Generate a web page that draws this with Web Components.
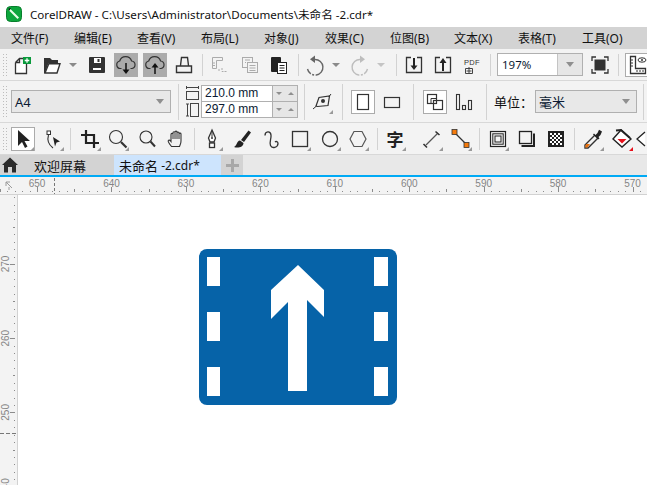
<!DOCTYPE html>
<html lang="zh-CN">

<head>
    <meta charset="UTF-8">
    <title>CorelDRAW</title>
    <style>
        html, body { margin: 0; padding: 0; background: #fff; }
        body { font: 12px "Noto Sans", "Noto Sans CJK SC", sans-serif; color: #111; }
    </style>
</head>

<body>
    <cdr-app></cdr-app>

    <script>
        const D = "#333";
        const G = "#ababab";
        // 工具图标，都画在 24x24 里
        const ICONS = {
            new: `<path d="M4.5 9.5 8.5 5.5H13M15.5 11V20.5H4.5V9.5M8.5 5.5V9.5H4.5" fill="#fff" stroke="${D}" stroke-width="1.3"/><rect x="12" y="4" width="8" height="7" fill="#0a9a3c"/><path d="M16 5.2v4.6M13.7 7.5h4.6" stroke="#fff" stroke-width="1.3"/>`,
            open: `<path d="M4 20V5h6l2 2h6v3H8.5L5 20z" fill="${D}"/><path d="M8.8 10.7H20L17 20H5z" fill="#fff" stroke="${D}" stroke-width="1.4"/>`,
            save: `<rect x="4" y="4" width="16" height="16" rx="1" fill="${D}"/><rect x="9" y="5" width="7" height="5" fill="#fff"/><rect x="12.5" y="6" width="2" height="3" fill="${D}"/><rect x="8" y="15" width="8" height="2" fill="#fff"/>`,
            cloudDown: `<path d="M7.5 15.5H6.5A3.8 3.8 0 0 1 5.7 8 6.2 6.2 0 0 1 17.6 8 3.8 3.8 0 0 1 18 15.5H16.5" fill="none" stroke="${D}" stroke-width="1.2"/><path d="M12 10v8" stroke="#111" stroke-width="1.5"/><path d="M8.5 16.5h7L12 21z" fill="#111"/>`,
            cloudUp: `<path d="M7.5 15.5H6.5A3.8 3.8 0 0 1 5.7 8 6.2 6.2 0 0 1 17.6 8 3.8 3.8 0 0 1 18 15.5H16.5" fill="none" stroke="${D}" stroke-width="1.2"/><path d="M12 13v8" stroke="#111" stroke-width="1.5"/><path d="M8.5 14.5h7L12 10z" fill="#111"/>`,
            print: `<path d="M8.5 12.5 9.5 4.5H15.5L16.5 12.5M8.5 13H4.5V19.5H19.5V13H16.5M8 13H16.5" fill="none" stroke="${D}" stroke-width="1.4"/>`,
            doc1: `<path d="M4.5 4.5H14.5V7.5H8.5V15.5H4.5z" fill="none" stroke="${G}"/><path d="M7 10H4.5M7 12.5H4.5M14 15v3.5h4.5" stroke="${G}" fill="none" stroke-dasharray="2 1"/><path d="M10 17h2" stroke="${G}"/>`,
            doc2: `<rect x="4.5" y="4.5" width="10" height="10" fill="none" stroke="${G}"/><rect x="9.5" y="9.5" width="10" height="10" fill="#f3f3f3" stroke="${G}"/><path d="M7 7h5M7 9.5h1M11.5 12.5h6M11.5 15h6M11.5 17.5h6" stroke="${G}"/>`,
            clip: `<rect x="4" y="4" width="10" height="15" rx="1" fill="#222"/><rect x="10.5" y="9.5" width="9" height="11" fill="#fff" stroke="#222"/><path d="M12.5 12.5h5M12.5 15h5M12.5 17.5h5" stroke="#222"/>`,
            undo: `<path d="M12 6.5A7.8 7.8 0 1 1 4.5 16" fill="none" stroke="#666" stroke-width="1.4" stroke-dasharray="24 1.5 2 1.5"/><path d="M12 2.5V10L7 6.2z" fill="#666"/>`,
            redo: `<path d="M12 6.5A7.8 7.8 0 1 0 19.5 16" fill="none" stroke="#bdbdbd" stroke-width="1.4" stroke-dasharray="24 1.5 2 1.5"/><path d="M12 2.5V10L17 6.2z" fill="#bdbdbd"/>`,
            import: `<path d="M9 4.5H4.5V19.5H19.5V4.5H15" fill="none" stroke="${D}" stroke-width="1.3"/><path d="M12 5v9" stroke="#222" stroke-width="2"/><path d="M8.5 12.5h7L12 17z" fill="#222"/>`,
            export: `<path d="M9 4.5H4.5V19.5H19.5V4.5H15" fill="none" stroke="${D}" stroke-width="1.3"/><path d="M12 8v10" stroke="#222" stroke-width="2"/><path d="M8.5 10h7L12 5z" fill="#222"/>`,
            pdf: `<text x="12" y="11.5" text-anchor="middle" font-size="7.5" font-family="Liberation Sans" letter-spacing=".4" fill="#333">PDF</text><path d="M5.5 15.5h7v5h-7zM9 14v6M6.5 18h5" fill="none" stroke="#444"/>`,
            fit: `<rect x="6.5" y="6.5" width="11" height="11" fill="${D}"/><path d="M4 8V4H8M16 4H20V8M20 16V20H16M8 20H4V16" fill="none" stroke="${D}" stroke-width="1.3"/>`,
            rulers: `<path d="M5.5 3.5V20.5H20.5V15.5H10.5V3.5z" fill="none" stroke="${D}" stroke-width="1.3"/><path d="M6 7h2M6 10h2M6 13h2M12 19v-2M15 19v-2M18 19v-2" stroke="${D}"/><ellipse cx="17" cy="7" rx="4" ry="2.2" fill="none" stroke="${D}"/><circle cx="17" cy="7" r="1" fill="${D}"/>`,
            snap: `<path d="M6 16 9 7.5 19.5 6 18 15.5 7.5 16.5z" fill="none" stroke="${D}" stroke-width="1.2"/><circle cx="13" cy="11" r="2" fill="${D}"/><path d="M3 19 6.5 16M19 6.5 21 4" stroke="${D}"/>`,
            portrait: `<rect x="6.5" y="4.5" width="11" height="15" fill="none" stroke="${D}" stroke-width="1.2"/>`,
            landscape: `<rect x="4.5" y="7.5" width="15" height="10" fill="none" stroke="${D}" stroke-width="1.2"/>`,
            pages: `<rect x="4.5" y="4.5" width="9" height="9" fill="none" stroke="${D}" stroke-width="1.2"/><rect x="10.5" y="10.5" width="9" height="9" fill="none" stroke="${D}" stroke-width="1.2"/><path d="M8 8.5h5.5v5H8z" fill="none" stroke="${D}"/>`,
            bars: `<rect x="4.5" y="4.5" width="3" height="15" fill="none" stroke="${D}" stroke-width="1.1"/><rect x="10.5" y="15.5" width="3" height="4" fill="none" stroke="${D}" stroke-width="1.1"/><rect x="16.5" y="10.5" width="3" height="9" fill="none" stroke="${D}" stroke-width="1.1"/>`,
            pointer: `<path d="M7 3V19L11 15 14 21 16.5 19.5 13.5 14H19z" fill="#222"/>`,
            node: `<rect x="6" y="4" width="3.5" height="3.5" fill="#fff" stroke="#333"/><path d="M7.5 8C6 13 8 18 12 21" fill="none" stroke="#333" stroke-width="1.1"/><path d="M12 9l7 4.5-3.5 1-1.5 4z" fill="#222" transform="translate(0 1)"/>`,
            crop: `<path d="M8 3V16H21M3 8H16V21" fill="none" stroke="#222" stroke-width="2.2"/>`,
            zoomFly: `<circle cx="10" cy="10" r="6.5" fill="none" stroke="${D}" stroke-width="1.1"/><path d="M15 15 20.5 20.5" stroke="${D}" stroke-width="2.2"/>`,
            zoom: `<circle cx="11" cy="10" r="6" fill="none" stroke="${D}" stroke-width="1.1"/><path d="M15.5 14.5 20 19.5" stroke="${D}" stroke-width="2"/>`,
            hand: `<path d="M7.5 19.5C5.5 17 4 15 4.2 13.8 4.5 12.5 6 13 7 14.5V7.5C7 6 9 6 9 7.5V5.8C9 4.3 11 4.3 11 5.8V5.2C11 3.8 13 3.8 13 5.2V6C13 4.7 15 4.7 15 6V7C15 5.8 17 5.8 17 7V14C17 17 16 18 15.5 19.5z" fill="#f3f3f3" stroke="${D}" stroke-width="1.1"/><path d="M9 7.5V12M11 5.8V12M13 6V12M15 7V12" stroke="${D}"/>`,
            pen: `<path d="M12 3 15.5 11 14 15H10L8.5 11z" fill="#fff" stroke="${D}" stroke-width="1.3"/><path d="M12 4v6" stroke="${D}"/><circle cx="12" cy="11" r="1" fill="${D}"/><rect x="9.5" y="16" width="5" height="4.5" fill="#fff" stroke="${D}" stroke-width="1.3"/>`,
            brush: `<path d="M11 13 18.5 3.5 21 5.5 14 15z" fill="#222"/><path d="M10 13.5C6.5 14 7.5 18 4 20 8 21.5 13.5 20 13.5 16z" fill="#222"/>`,
            curve: `<path d="M5 8.5C5 4 10.5 3.5 11 8 11.5 12 9 15 10.5 18.5 12 22 18 20.5 18 16.5 18 14.5 16 14 15 15" fill="none" stroke="${D}" stroke-width="1.3"/>`,
            rect: `<rect x="4.5" y="4.5" width="15" height="15" fill="none" stroke="${D}" stroke-width="1.3"/>`,
            ellipse: `<circle cx="12" cy="12" r="7.5" fill="none" stroke="${D}" stroke-width="1.3"/>`,
            hexagon: `<path d="M8 4.5H16L20 12 16 19.5H8L4 12z" fill="none" stroke="#555" stroke-width="1.2"/>`,
            char: `<text x="12" y="19" text-anchor="middle" font-size="17" font-weight="700" font-family="Noto Sans CJK SC" fill="#222">字</text>`,
            line: `<path d="M6 18 18 6" stroke="#555" stroke-width="1.2"/><path d="M3.5 17 7 20.5M15.5 4.5 19.5 8" stroke="#333" stroke-width="1.6"/>`,
            connector: `<path d="M6 6 18 18" stroke="#333" stroke-width="1.2"/><rect x="3" y="2.5" width="5" height="5" fill="#f47a0c" stroke="#333" stroke-width=".8"/><rect x="15" y="15.5" width="5" height="5" fill="#f47a0c" stroke="#333" stroke-width=".8"/>`,
            contour: `<rect x="4.5" y="4.5" width="15" height="15" fill="none" stroke="#222" stroke-width="1.2"/><rect x="6.8" y="6.8" width="10.4" height="10.4" fill="none" stroke="#222"/><rect x="9" y="9" width="6" height="6" fill="none" stroke="#222"/>`,
            shadow: `<rect x="4.5" y="4.5" width="12" height="12" fill="none" stroke="#222" stroke-width="1.3"/><path d="M18 6.5h2V20H6.5v-2H18z" fill="#222"/>`,
            checker: `<rect x="4" y="4" width="16" height="16" fill="#222"/><path d="M6 6h2v2H6zM10 6h2v2h-2zM14 6h2v2h-2zM8 8h2v2H8zM12 8h2v2h-2zM16 8h2v2h-2zM6 10h2v2H6zM10 10h2v2h-2zM14 10h2v2h-2zM8 12h2v2H8zM12 12h2v2h-2zM16 12h2v2h-2zM6 14h2v2H6zM10 14h2v2h-2zM14 14h2v2h-2zM8 16h2v2H8zM12 16h2v2h-2zM16 16h2v2h-2z" fill="#fff"/>`,
            dropper: `<path d="M14 8 4 18 4 21 7 21 17 11" fill="none" stroke="#333" stroke-width="1.4"/><path d="M5 17 9 17 6.5 20.5H4z" fill="#e8710f"/><path d="M13 6.5 14.5 8 16.5 6 18 2.8 21 4.5 19.5 8 17.5 10 18.5 11.5 17 12.5 12 7.5z" fill="#222"/>`,
            fill: `<path d="M11 3 21 12 12 20 3 12z" fill="#fff" stroke="#222" stroke-width="1.4"/><path d="M6 3.5 11 3 20 11" fill="none" stroke="#222" stroke-width="2"/><path d="M7.5 12H16.5L12 16.5z" fill="#e8101c"/>`,
            next: `<path d="M12 5 4 12 12 19" fill="#fff" stroke="#222" stroke-width="1.3"/>`
        };

        // 工具栏把手
        class TbGrip extends HTMLElement {
            constructor() {
                super();
                this.attachShadow({ mode: "open" }).innerHTML = `<style>
                    :host { display: block; flex: none; width: 8px; align-self: stretch; margin: 4px 0;
                        background: radial-gradient(circle, #bdbdbd .8px, transparent 1px) 2px 0 / 3px 3px repeat;
                        clip-path: inset(0 1px 0 2px); }
                </style>`;
            }
        }
        // 分隔线
        class TbSep extends HTMLElement {
            constructor() {
                super();
                const w = this.getAttribute("w") || 2;
                const h = this.getAttribute("h") || 22;
                this.attachShadow({ mode: "open" }).innerHTML = `<style>
                    :host { display: flex; flex: none; justify-content: center; align-items: center; width: ${w}px; }
                    i { display: block; width: 1px; height: ${h}px; background: #d2d2d2; }
                </style><i></i>`;
            }
        }
        class TbGap extends HTMLElement {
            constructor() {
                super();
                this.attachShadow({ mode: "open" }).innerHTML = `<style>:host { display: block; flex: none; width: ${this.getAttribute("w")}px; }</style>`;
            }
        }
        // 工具按钮
        class TbTool extends HTMLElement {
            constructor() {
                super();
                const w = this.getAttribute("w") || 24;
                const fly = this.getAttribute("fly");
                const state = this.getAttribute("state");
                const look = state === "pressed" ? "background:#ababab;width:24px;height:24px;"
                    : state === "on" ? "background:#fff;outline:1px solid #ababab;outline-offset:-1px;width:24px;height:24px;" : "";
                const corner = fly === null ? "" :
                    `<b style="border-bottom-color:${fly === "red" ? "#e8101c" : "#9a9a9a"}"></b>`;
                this.attachShadow({ mode: "open" }).innerHTML = `<style>
                    :host { display: flex; flex: none; width: ${w}px; height: 24px; justify-content: center; align-items: center; }
                    span { position: relative; flex: none; display: flex; width: 24px; height: 24px; ${look} }
                    svg { width: 24px; height: 24px; flex: none; }
                    b { position: absolute; left: 19px; top: 20px; width: 0; height: 0; border-left: 4px solid transparent; border-bottom: 4px solid; }
                </style><span><svg viewBox="0 0 24 24">${ICONS[this.getAttribute("icon")]}</svg>${corner}</span>`;
            }
        }
        // 小三角
        class TbCaret extends HTMLElement {
            constructor() {
                super();
                const w = this.getAttribute("w") || 10;
                const c = this.getAttribute("c") || "#8a8a8a";
                this.attachShadow({ mode: "open" }).innerHTML = `<style>
                    :host { display: flex; flex: none; width: ${w}px; justify-content: center; align-items: center; }
                    i { display: block; border: 4px solid transparent; border-top: 4px solid ${c}; border-bottom: 0; }
                </style><i></i>`;
            }
        }
        // 下拉框
        class TbCombo extends HTMLElement {
            constructor() {
                super();
                const w = this.getAttribute("w");
                const white = this.hasAttribute("white");
                this.attachShadow({ mode: "open" }).innerHTML = `<style>
                    :host { display: flex; flex: none; box-sizing: border-box; width: ${w}px; height: ${this.getAttribute("h") || 23}px;
                        border: 1px solid #b0b0b0; background: ${white ? "#fff" : "#e8e8e8"}; align-items: center;
                        font-size: ${white ? 11.5 : 13}px; color: #0b1a33; }
                    .t { flex: 1; padding-left: ${white ? 4 : 3}px; white-space: nowrap; }
                    .b { display: flex; align-items: center; justify-content: center; align-self: stretch; width: ${white ? 24 : 20}px;
                        ${white ? "background:#e6e6e6;border-left:1px solid #c4c4c4;" : ""} }
                    i { display: block; border: 4.5px solid transparent; border-top: 5px solid #8f8f8f; border-bottom: 0; }
                </style><div class="t"><slot></slot></div><div class="b"><i></i></div>`;
            }
        }
        // 页面尺寸输入
        class TbSize extends HTMLElement {
            constructor() {
                super();
                const spin = `<span class="s"><i class="d"></i></span><span class="s"><i class="u"></i></span>`;
                this.attachShadow({ mode: "open" }).innerHTML = `<style>
                    :host { display: grid; flex: none; box-sizing: border-box; width: 97px; height: 33px; border: 1px solid #b0b0b0;
                        grid-template-columns: 1fr 12px 12px; grid-template-rows: 1fr 1fr; background: #e6e6e6;
                        font: 12px "Liberation Sans", sans-serif; color: #0b1a33; }
                    .v { background: #fff; line-height: 15px; padding-left: 3px; border-right: 1px solid #b0b0b0; }
                    .v.a { border-bottom: 1px solid #b0b0b0; }
                    .s { display: flex; align-items: center; justify-content: center; }
                    .s.l { border-bottom: 1px solid #b0b0b0; }
                    i { display: block; border: 3px solid transparent; }
                    i.d { border-top: 3px solid #8f8f8f; border-bottom: 0; }
                    i.u { border-bottom: 3px solid #8f8f8f; border-top: 0; }
                </style>
                <div class="v a">${this.getAttribute("a")}</div><span class="s l"><i class="d"></i></span><span class="s l"><i class="u"></i></span>
                <div class="v">${this.getAttribute("b")}</div>${spin}`;
            }
        }
        // 工具栏一行
        class TbRow extends HTMLElement {
            constructor() {
                super();
                this.attachShadow({ mode: "open" }).innerHTML = `<style>
                    :host { display: flex; box-sizing: content-box; height: ${this.getAttribute("h")}px; background: #f3f3f3;
                        border-bottom: 1px solid #d8d8d8; align-items: center; overflow: hidden; }
                </style><slot></slot>`;
            }
        }
        class CdrTitle extends HTMLElement {
            constructor() {
                super();
                this.attachShadow({ mode: "open" }).innerHTML = `<style>
                    :host { display: flex; height: 27px; align-items: center; background: #fff; padding-left: 6px; gap: 8px; font-size: 11.6px; color: #111; white-space: nowrap; }
                    svg { width: 16px; height: 16px; flex: none; }
                </style>
                <svg viewBox="0 0 16 16"><rect x=".5" y=".5" width="15" height="15" rx="4" fill="#0ca63c" stroke="#087f2d"/><path d="M3 4.5 4.5 3 13 11.5 11.5 13z" fill="#e8ffe8"/><path d="M2.5 2.5 5 2 3 5z" fill="#111"/></svg>
                <span><slot></slot></span>`;
            }
        }
        class CdrMenu extends HTMLElement {
            constructor() {
                super();
                const items = [["文件(F)", 11], ["编辑(E)", 74], ["查看(V)", 137], ["布局(L)", 201], ["对象(J)", 264], ["效果(C)", 325], ["位图(B)", 390], ["文本(X)", 454], ["表格(T)", 518], ["工具(O)", 582]];
                const cells = items.map((it, i) => {
                    const next = items[i + 1] ? items[i + 1][1] : 647;
                    return `<span style="width:${next - it[1]}px">${it[0]}</span>`;
                }).join("");
                this.attachShadow({ mode: "open" }).innerHTML = `<style>
                    :host { display: flex; height: 22px; background: #d3d3d3; align-items: center; padding-left: 11px; font-size: 12px; color: #111; overflow: hidden; }
                    span { flex: none; white-space: nowrap; }
                </style>${cells}`;
            }
        }
        class CdrTabs extends HTMLElement {
            constructor() {
                super();
                this.attachShadow({ mode: "open" }).innerHTML = `<style>
                    :host { display: flex; height: 20px; background: #e8e8e8; border-bottom: 2px solid #00aaf5; font-size: 13px; color: #111; box-sizing: content-box; }
                    .home { display: flex; width: 114px; background: #d3d3d3; align-items: center; }
                    svg { width: 18px; height: 18px; margin: 0 15px 0 1px; flex: none; }
                    .act { display: flex; align-items: center; width: 107px; padding-left: 5px; box-sizing: border-box; background: #cde4fd; white-space: pre; }
                    .act span { font-size: 12px; }
                    .plus { display: flex; width: 22px; align-items: center; justify-content: center; background: #d3d3d3; }
                    .plus svg { width: 13px; height: 13px; margin: 0; }
                </style>
                <div class="home"><svg viewBox="0 0 18 18"><path d="M9 1.5 17 9H15V16.5H11V11H7V16.5H3V9H1z" fill="#2b2b2b"/></svg>欢迎屏幕</div>
                <div class="act">未命名<span> -2.cdr*</span></div>
                <div class="plus"><svg viewBox="0 0 13 13"><path d="M6.5 0v13M0 6.5h13" stroke="#a8a8a8" stroke-width="3"/></svg></div>`;
            }
        }
        // 水平标尺，刻度用 SVG 画
        class RulerH extends HTMLElement {
            constructor() {
                super();
                let s = `<path d="M6 182l6 6M6 182h4M6 182v4M9 190v-3" transform="translate(0 -177)" stroke="#9a9a9a" fill="none"/>`;
                const step = 74.45;
                for (let i = -1; i < 10; i++) {
                    const x = 37 + i * step;
                    if (i >= 0 && x < 640) {
                        s += `<text x="${x.toFixed(1)}" y="10" text-anchor="middle">${650 - i * 10}</text>`;
                    }
                    s += `<rect x="${Math.round(x)}" y="10" width="1" height="5" fill="#8c8c8c"/>`;
                    for (let k = 1; k < 10; k++) {
                        const tx = Math.round(x + k * step / 10);
                        s += k === 5 ? `<rect x="${tx}" y="12" width="1" height="3" fill="#8c8c8c"/>`
                            : `<rect x="${tx}" y="14" width="1" height="1" fill="#8c8c8c"/>`;
                    }
                }
                s += `<path d="M54.5 1v16" stroke="#777" stroke-dasharray="3 2"/>`;
                this.attachShadow({ mode: "open" }).innerHTML = `<style>
                    :host { display: block; height: 17px; background: #f3f3f3; border-bottom: 1px solid #d2d2d2; box-sizing: content-box; overflow: hidden; }
                    svg { display: block; width: 647px; height: 17px; }
                    text { font: 10px "Liberation Sans", sans-serif; fill: #858585; }
                </style><svg viewBox="0 0 647 17">${s}</svg>`;
            }
        }
        // 垂直标尺
        class RulerV extends HTMLElement {
            constructor() {
                super();
                let s = "";
                const step = 74.2;
                // 从画布顶部 195 算起
                for (let i = -1; i < 5; i++) {
                    const y = 264 - 195 + i * step;
                    // 240 只露出一截，和原图一样
                    if (i >= 0 && i < 4) {
                        s += `<text transform="translate(9 ${y.toFixed(1)}) rotate(-90)" text-anchor="middle">${270 - i * 10}</text>`;
                    }
                    s += `<rect x="10" y="${Math.round(y)}" width="5" height="1" fill="#8c8c8c"/>`;
                    for (let k = 1; k < 10; k++) {
                        const ty = Math.round(y + k * step / 10);
                        s += k === 5 ? `<rect x="13" y="${ty}" width="2" height="1" fill="#8c8c8c"/>`
                            : `<rect x="14" y="${ty}" width="1" height="1" fill="#8c8c8c"/>`;
                    }
                }
                s += `<path d="M0 238.5h17" stroke="#777" stroke-dasharray="4 2"/>`;
                this.attachShadow({ mode: "open" }).innerHTML = `<style>
                    :host { display: block; flex: none; width: 17px; background: #f3f3f3; border-right: 1px solid #d2d2d2; box-sizing: content-box; overflow: hidden; }
                    svg { display: block; width: 17px; height: 290px; }
                    text { font: 10px "Liberation Sans", sans-serif; fill: #858585; }
                </style><svg viewBox="0 0 17 290">${s}</svg>`;
            }
        }
        // 画布上的蓝色标志
        class LaneSign extends HTMLElement {
            constructor() {
                super();
                const bars = [8, 63, 118].map(y => `<rect x="8" y="${y}" width="13" height="29"/><rect x="175" y="${y}" width="14" height="29"/>`).join("");
                this.attachShadow({ mode: "open" }).innerHTML = `<style>
                    :host { display: block; width: 198px; height: 156px; }
                    svg { display: block; width: 198px; height: 156px; }
                </style>
                <svg viewBox="0 0 198 156"><rect width="198" height="156" rx="8" fill="#0663a8"/>
                <g fill="#fff">${bars}<path d="M99 16 72 41V70L89 53V142H108V51L125 68V41z"/></g></svg>`;
            }
        }
        class CdrCanvas extends HTMLElement {
            constructor() {
                super();
                this.attachShadow({ mode: "open" }).innerHTML = `<style>
                    :host { display: block; flex: 1; background: #fff; padding: 54px 0 0 181px; }
                </style><slot></slot>`;
            }
        }
        class CdrApp extends HTMLElement {
            constructor() {
                super();
                this.attachShadow({ mode: "open" }).innerHTML = `<style>
                    :host { display: flex; flex-direction: column; width: 647px; height: 485px; overflow: hidden; }
                    .work { display: flex; flex: 1; min-height: 0; }
                    .label { flex: none; width: 41px; font-size: 13px; color: #111; }
                    .dims { flex: none; width: 19px; height: 33px; }
                </style>
                <cdr-title>CorelDRAW - C:\\Users\\Administrator\\Documents\\未命名 -2.cdr*</cdr-title>
                <cdr-menu></cdr-menu>

                <tb-row h="31">
                    <tb-grip></tb-grip>
                    <tb-tool w="30" icon="new"></tb-tool>
                    <tb-tool w="28" icon="open"></tb-tool>
                    <tb-caret w="14"></tb-caret>
                    <tb-tool w="34" icon="save"></tb-tool>
                    <tb-tool w="24" icon="cloudDown" state="pressed"></tb-tool>
                    <tb-gap w="5"></tb-gap>
                    <tb-tool w="24" icon="cloudUp" state="pressed"></tb-tool>
                    <tb-tool w="34" icon="print"></tb-tool>
                    <tb-sep></tb-sep>
                    <tb-tool w="34" icon="doc1"></tb-tool>
                    <tb-tool w="26" icon="doc2"></tb-tool>
                    <tb-tool w="32" icon="clip"></tb-tool>
                    <tb-sep w="6"></tb-sep>
                    <tb-tool w="28" icon="undo"></tb-tool>
                    <tb-caret w="14"></tb-caret>
                    <tb-tool w="34" icon="redo"></tb-tool>
                    <tb-caret w="8" c="#c4c4c4"></tb-caret>
                    <tb-gap w="7"></tb-gap>
                    <tb-sep w="8"></tb-sep>
                    <tb-tool w="28" icon="import"></tb-tool>
                    <tb-tool w="30" icon="export"></tb-tool>
                    <tb-tool w="28" icon="pdf"></tb-tool>
                    <tb-sep w="8"></tb-sep>
                    <tb-gap w="3"></tb-gap>
                    <tb-combo w="86" white>197%</tb-combo>
                    <tb-tool w="34" icon="fit"></tb-tool>
                    <tb-sep></tb-sep>
                    <tb-gap w="6"></tb-gap>
                    <tb-tool w="24" icon="rulers" state="on"></tb-tool>
                </tb-row>

                <tb-row h="41">
                    <tb-grip></tb-grip>
                    <tb-gap w="3"></tb-gap>
                    <tb-combo w="160">A4</tb-combo>
                    <tb-gap w="3"></tb-gap>
                    <tb-sep w="8" h="36"></tb-sep>
                    <svg class="dims" viewBox="0 0 19 33">
                        <path d="M4.5 2.5h12M4.5 1v3M16.5 1v3" stroke="#444" fill="none"/>
                        <rect x="4.5" y="6.5" width="12" height="8" fill="none" stroke="#444"/>
                        <path d="M5.5 19v12M4 19h3M4 31h3" stroke="#444" fill="none"/>
                        <rect x="8.5" y="18.5" width="8" height="13" fill="none" stroke="#444"/>
                    </svg>
                    <tb-size a="210.0 mm" b="297.0 mm"></tb-size>
                    <tb-sep w="12" h="36"></tb-sep>
                    <tb-tool w="24" icon="snap" fly></tb-tool>
                    <tb-gap w="4"></tb-gap>
                    <tb-sep w="8" h="36"></tb-sep>
                    <tb-gap w="5"></tb-gap>
                    <tb-tool w="24" icon="portrait" state="on"></tb-tool>
                    <tb-tool w="34" icon="landscape"></tb-tool>
                    <tb-sep w="8" h="36"></tb-sep>
                    <tb-gap w="6"></tb-gap>
                    <tb-tool w="24" icon="pages" state="on"></tb-tool>
                    <tb-tool w="34" icon="bars"></tb-tool>
                    <tb-sep w="10" h="36"></tb-sep>
                    <tb-gap w="3"></tb-gap>
                    <span class="label">单位：</span>
                    <tb-combo w="102">毫米</tb-combo>
                    <tb-sep w="12" h="36"></tb-sep>
                </tb-row>

                <tb-row h="31">
                    <tb-grip></tb-grip>
                    <tb-gap w="3"></tb-gap>
                    <tb-tool w="24" icon="pointer" state="on" fly></tb-tool>
                    <tb-gap w="2"></tb-gap>
                    <tb-tool w="32" icon="node" fly></tb-tool>
                    <tb-sep></tb-sep>
                    <tb-tool w="38" icon="crop" fly></tb-tool>
                    <tb-tool w="18" icon="zoomFly" fly></tb-tool>
                    <tb-tool w="40" icon="zoom"></tb-tool>
                    <tb-tool w="18" icon="hand"></tb-tool>
                    <tb-sep w="18"></tb-sep>
                    <tb-tool w="18" icon="pen" fly></tb-tool>
                    <tb-tool w="42" icon="brush"></tb-tool>
                    <tb-tool w="18" icon="curve"></tb-tool>
                    <tb-tool w="38" icon="rect" fly></tb-tool>
                    <tb-tool w="21" icon="ellipse" fly></tb-tool>
                    <tb-tool w="36" icon="hexagon" fly></tb-tool>
                    <tb-sep></tb-sep>
                    <tb-tool w="34" icon="char" fly></tb-tool>
                    <tb-tool w="40" icon="line" fly></tb-tool>
                    <tb-tool w="18" icon="connector" fly></tb-tool>
                    <tb-sep w="18"></tb-sep>
                    <tb-tool w="20" icon="contour" fly></tb-tool>
                    <tb-tool w="38" icon="shadow"></tb-tool>
                    <tb-tool w="20" icon="checker"></tb-tool>
                    <tb-sep w="16"></tb-sep>
                    <tb-tool w="22" icon="dropper" fly></tb-tool>
                    <tb-tool w="36" icon="fill" fly="red"></tb-tool>
                    <tb-tool w="10" icon="next"></tb-tool>
                </tb-row>

                <cdr-tabs></cdr-tabs>
                <ruler-h></ruler-h>
                <div class="work">
                    <ruler-v></ruler-v>
                    <cdr-canvas><lane-sign></lane-sign></cdr-canvas>
                </div>`;
            }
        }

        // 子元素先注册，CdrApp 最后
        customElements.define("tb-grip", TbGrip);
        customElements.define("tb-sep", TbSep);
        customElements.define("tb-gap", TbGap);
        customElements.define("tb-tool", TbTool);
        customElements.define("tb-caret", TbCaret);
        customElements.define("tb-combo", TbCombo);
        customElements.define("tb-size", TbSize);
        customElements.define("tb-row", TbRow);
        customElements.define("cdr-title", CdrTitle);
        customElements.define("cdr-menu", CdrMenu);
        customElements.define("cdr-tabs", CdrTabs);
        customElements.define("ruler-h", RulerH);
        customElements.define("ruler-v", RulerV);
        customElements.define("lane-sign", LaneSign);
        customElements.define("cdr-canvas", CdrCanvas);
        customElements.define("cdr-app", CdrApp);
    </script>
</body>

</html>
